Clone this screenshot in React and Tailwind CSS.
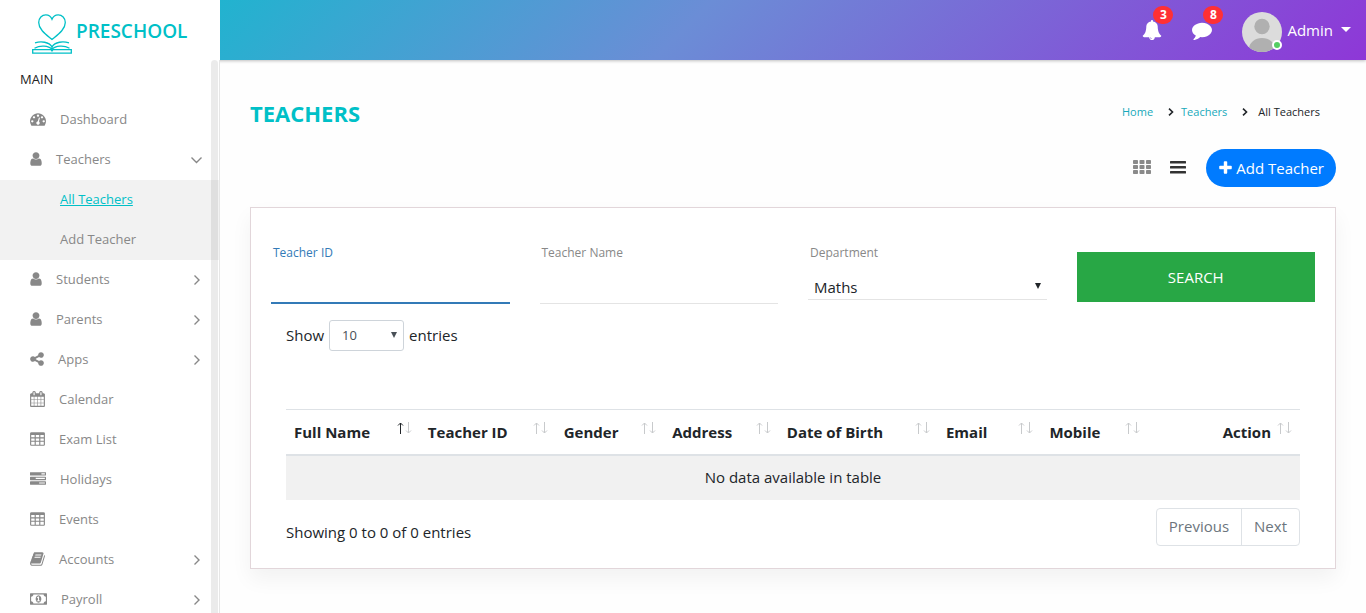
import React, { useState } from "react";

const ICONS = {
  dashboard: {
    box: "0 0 1792 1792",
    w: "w-4",
    d: "M384 1152q0-53-37.5-90.5t-90.5-37.5-90.5 37.5-37.5 90.5 37.5 90.5 90.5 37.5 90.5-37.5 37.5-90.5zm192-448q0-53-37.5-90.5t-90.5-37.5-90.5 37.5-37.5 90.5 37.5 90.5 90.5 37.5 90.5-37.5 37.5-90.5zm428 481l101-382q6-26-7.5-48.5t-38.5-29.5-48 6.5-30 39.5l-101 382q-60 5-107 43.5t-63 98.5q-20 77 20 146t117 89 146-20 89-117q16-60-6-117t-72-91zm660-33q0-53-37.5-90.5t-90.5-37.5-90.5 37.5-37.5 90.5 37.5 90.5 90.5 37.5 90.5-37.5 37.5-90.5zm-640-640q0-53-37.5-90.5t-90.5-37.5-90.5 37.5-37.5 90.5 37.5 90.5 90.5 37.5 90.5-37.5 37.5-90.5zm448 192q0-53-37.5-90.5t-90.5-37.5-90.5 37.5-37.5 90.5 37.5 90.5 90.5 37.5 90.5-37.5 37.5-90.5zm320 448q0 261-141 483-19 29-54 29h-1402q-35 0-54-29-141-221-141-483 0-182 71-348t191-286 286-191 348-71 348 71 286 191 191 286 71 348z",
  },
  user: {
    box: "256 0 1280 1792",
    w: "w-3",
    d: "M1536 1399q0 109-62.5 187t-150.5 78h-854q-88 0-150.5-78t-62.5-187q0-85 8.5-160.5t31.5-152 58.5-131 94-89 134.5-34.5q131 128 313 128t313-128q76 0 134.5 34.5t94 89 58.5 131 31.5 152 8.5 160.5zm-256-887q0 159-112.5 271.5t-271.5 112.5-271.5-112.5-112.5-271.5 112.5-271.5 271.5-112.5 271.5 112.5 112.5 271.5z",
  },
  share: {
    box: "128 0 1536 1792",
    w: "w-[14px]",
    d: "M1344 1024q133 0 226.5 93.5t93.5 226.5-93.5 226.5-226.5 93.5-226.5-93.5-93.5-226.5q0-12 2-34l-360-180q-92 86-218 86-133 0-226.5-93.5t-93.5-226.5 93.5-226.5 226.5-93.5q126 0 218 86l360-180q-2-22-2-34 0-133 93.5-226.5t226.5-93.5 226.5 93.5 93.5 226.5-93.5 226.5-226.5 93.5q-126 0-218-86l-360 180q2 22 2 34t-2 34l360 180q92-86 218-86z",
  },
  calendar: {
    box: "64 0 1664 1792",
    w: "w-[15px]",
    d: "M192 1664h288v-288h-288v288zm352 0h320v-288h-320v288zm-352-352h288v-320h-288v320zm352 0h320v-320h-320v320zm-352-384h288v-288h-288v288zm736 736h320v-288h-320v288zm-384-736h320v-288h-320v288zm768 736h288v-288h-288v288zm-384-352h320v-320h-320v320zm-352-864v-288q0-13-9.5-22.5t-22.5-9.5h-64q-13 0-22.5 9.5t-9.5 22.5v288q0 13 9.5 22.5t22.5 9.5h64q13 0 22.5-9.5t9.5-22.5zm736 864h288v-320h-288v320zm-384-384h320v-288h-320v288zm384 0h288v-288h-288v288zm32-480v-288q0-13-9.5-22.5t-22.5-9.5h-64q-13 0-22.5 9.5t-9.5 22.5v288q0 13 9.5 22.5t22.5 9.5h64q13 0 22.5-9.5t9.5-22.5zm384-64v1280q0 52-38 90t-90 38h-1408q-52 0-90-38t-38-90v-1280q0-52 38-90t90-38h128v-96q0-66 47-113t113-47h64q66 0 113 47t47 113v96h384v-96q0-66 47-113t113-47h64q66 0 113 47t47 113v96h128q52 0 90 38t38 90z",
  },
  table: {
    box: "64 0 1664 1792",
    w: "w-[15px]",
    d: "M224 128h1344q66 0 113 47t47 113v1216q0 66-47 113t-113 47h-1344q-66 0-113-47t-47-113v-1216q0-66 47-113t113-47zM192 448v256h384v-256zM704 448v256h384v-256zM1216 448v256h384v-256zM192 832v256h384v-256zM704 832v256h384v-256zM1216 832v256h384v-256zM192 1216v288q0 32 32 32h352v-320zM704 1216v320h384v-320zM1216 1216v320h352q32 0 32-32v-288z",
  },
  tasks: {
    box: "0 0 1792 1792",
    w: "w-4",
    d: "M1024 1408h640v-128h-640v128zm-384-512h1024v-128h-1024v128zm640-512h384v-128h-384v128zm512 832v256q0 26-19 45t-45 19h-1664q-26 0-45-19t-19-45v-256q0-26 19-45t45-19h1664q26 0 45 19t19 45zm0-512v256q0 26-19 45t-45 19h-1664q-26 0-45-19t-19-45v-256q0-26 19-45t45-19h1664q26 0 45 19t19 45zm0-512v256q0 26-19 45t-45 19h-1664q-26 0-45-19t-19-45v-256q0-26 19-45t45-19h1664q26 0 45 19t19 45z",
  },
  book: {
    box: "64 0 1664 1792",
    w: "w-[15px]",
    d: "M1703 478q40 57 18 129l-275 906q-19 64-76.5 107.5t-122.5 43.5h-923q-77 0-148.5-53.5t-99.5-131.5q-24-67-2-127 0-4 3-27t4-37q1-8-3-21.5t-3-19.5q2-11 8-21t16.5-23.5 16.5-23.5q23-38 45-91.5t30-91.5q3-10 .5-30t-.5-28q3-11 17-28t17-23q21-36 42-92t25-90q1-9-2.5-32t.5-28q4-13 22-30.5t22-22.5q19-26 42.5-84.5t27.5-96.5q1-8-3-25.5t-2-26.5q2-8 9-18t18-23 17-21q8-12 16.5-30.5t15-35 16-36 19.5-32 26.5-23.5 36-11.5 47.5 5.5l-1 3q38-9 51-9h761q74 0 114 56t18 130l-274 906q-36 119-71.5 153.5t-128.5 34.5h-869q-27 0-38 15-11 16-1 43 24 70 144 70h923q29 0 56-15.5t35-41.5l300-987q7-22 5-57 38 15 59 43zm-1064 2q-4 13 2 22.5t20 9.5h608q13 0 25.5-9.5t16.5-22.5l21-64q4-13-2-22.5t-20-9.5h-608q-13 0-25.5 9.5t-16.5 22.5zm-83 256q-4 13 2 22.5t20 9.5h608q13 0 25.5-9.5t16.5-22.5l21-64q4-13-2-22.5t-20-9.5h-608q-13 0-25.5 9.5t-16.5 22.5z",
  },
  money: {
    box: "0 0 1920 1792",
    w: "w-[17px]",
    d: "M768 1152h384v-96h-128v-448h-114l-148 137 77 80q42-37 55-57h2v288h-128v96zm512-256q0 70-21 142t-59.5 134-101.5 101-138 39-138-39-101.5-101-59.5-134-21-142 21-142 59.5-134 101.5-101 138-39 138 39 101.5 101 59.5 134 21 142zm512 256v-512q-106 0-181-75t-75-181h-1152q0 106-75 181t-181 75v512q106 0 181 75t75 181h1152q0-106 75-181t181-75zm128-832v1152q0 26-19 45t-45 19h-1792q-26 0-45-19t-19-45v-1152q0-26 19-45t45-19h1792q26 0 45 19t19 45z",
  },
  bell: {
    box: "0 0 1792 1792",
    w: "w-5",
    d: "M912 1696q0-16-16-16-59 0-101.5-42.5t-42.5-101.5q0-16-16-16t-16 16q0 73 51.5 124.5t124.5 51.5q16 0 16-16zm816-288q0 52-38 90t-90 38h-448q0 106-75 181t-181 75-181-75-75-181h-448q-52 0-90-38t-38-90q50-42 91-88t85-119.5 74.5-158.5 50-206 19.5-260q0-152 117-282.5t307-158.5q-8-19-8-39 0-40 28-68t68-28 68 28 28 68q0 20-8 39 190 28 307 158.5t117 282.5q0 139 19.5 260t50 206 74.5 158.5 85 119.5 91 88z",
  },
  comment: {
    box: "0 0 1792 1792",
    w: "w-5",
    d: "M1792 896q0 174-120 321.5t-326 233-450 85.5q-70 0-145-8-198 175-460 242-49 14-114 22-17 2-30.5-9t-17.5-29v-1q-3-4-.5-12t2-10 4.5-9.5l6-9 7-8.5 8-9q7-8 31-34.5t34.5-38 31-39.5 32.5-51 27-59 26-76q-157-89-247.5-220t-90.5-281q0-130 71-248.5t191-204.5 286-136.5 348-50.5q244 0 450 85.5t326 233 120 321.5z",
  },
  plus: {
    box: "192 0 1408 1792",
    w: "w-[13px]",
    d: "M1600 736v192q0 40-28 68t-68 28h-416v416q0 40-28 68t-68 28h-192q-40 0-68-28t-28-68v-416h-416q-40 0-68-28t-28-68v-192q0-40 28-68t68-28h416v-416q0-40 28-68t68-28h192q40 0 68 28t28 68v416h416q40 0 68 28t28 68z",
  },
};

function Icon({ name, className = "h-4" }) {
  const icon = ICONS[name];
  return (
    <svg viewBox={icon.box} className={`${icon.w} ${className} shrink-0`} fill="currentColor" fillRule="evenodd" aria-hidden="true">
      <path d={icon.d} />
    </svg>
  );
}

function Chevron({ open }) {
  return (
    <svg viewBox="0 0 12 12" className="h-3 w-3" fill="none" stroke="currentColor" strokeWidth="1.4" aria-hidden="true">
      <path d={open ? "M1.500 3.500l5 5 5-5" : "M4.500 1.500l4.500 4.500-4.500 4.500"} />
    </svg>
  );
}

function Logo() {
  return (
    <svg viewBox="0 0 40 40" className="h-10 w-10" fill="none" stroke="#00c0c7" strokeWidth="1.3" aria-hidden="true">
      <path d="M20 25.5C14 20.5 6.7 15.500 6.700 8.500C6.700 4 10 .8 13.800 .8C16.800 .8 19 2.600 20 5.200C21 2.600 23.200 .8 26.200 .8C30 .8 33.300 4 33.300 8.500C33.300 15.500 26 20.500 20 25.500Z" />
      <path d="M.7 35.700H19L20 37L21 35.700H39.300V39.200H.7Z" />
      <path d="M2.500 34.200C8 31.200 16.500 31.500 20 35.500C23.500 31.500 32 31.200 37.500 34.200M3 28.800C9 27 17 27.700 20 33C23 27.700 31 27 37 28.800M20 31.500V36" />
    </svg>
  );
}

const MENU = [
  { label: "Dashboard", icon: "dashboard" },
  { label: "Teachers", icon: "user", open: true, children: ["All Teachers", "Add Teacher"] },
  { label: "Students", icon: "user", more: true },
  { label: "Parents", icon: "user", more: true },
  { label: "Apps", icon: "share", more: true },
  { label: "Calendar", icon: "calendar" },
  { label: "Exam List", icon: "table" },
  { label: "Holidays", icon: "tasks" },
  { label: "Events", icon: "table" },
  { label: "Accounts", icon: "book", more: true },
  { label: "Payroll", icon: "money", more: true },
];

function Sidebar() {
  return (
    <aside className="relative w-[220px] shrink-0 overflow-hidden border-r border-[#e6e6e6] bg-white text-[13px] text-[#888]">
      <h2 className="flex h-10 items-center pl-5 text-[13px] text-[#222]">MAIN</h2>
      <nav aria-label="Main">
        <ul>
          {MENU.map((item) => (
            <li key={item.label}>
              <a href="#" className="flex h-10 items-center gap-[14px] pr-[17px] pl-[30px]">
                <Icon name={item.icon} className="mb-0.5 h-4" />
                <span className="flex-1">{item.label}</span>
                {(item.more || item.open) && <Chevron open={item.open} />}
              </a>
              {item.children && (
                <ul className="bg-[#f2f2f2]">
                  {item.children.map((child, i) => (
                    <li key={child}>
                      <a href="#" className={`flex h-10 items-center pl-[60px] ${i === 0 ? "text-[#00c0c7] underline" : ""}`}>
                        {child}
                      </a>
                    </li>
                  ))}
                </ul>
              )}
            </li>
          ))}
        </ul>
      </nav>
      <div className="absolute inset-y-0 right-px w-[7px] rounded-t-full bg-black/8" />
    </aside>
  );
}

function Badge({ children }) {
  return (
    <span className="absolute -top-[14px] left-[11px] flex h-[18px] w-5 items-center justify-center rounded-full bg-[#ff3035] text-xs font-bold">
      {children}
    </span>
  );
}

function Header() {
  return (
    <header className="relative flex h-[60px] bg-[linear-gradient(135deg,#00c4cc_0%,#6b8dd6_50%,#8e37d7_100%)] text-white shadow-[0_1px_3px_rgba(0,0,0,0.25)]">
      <a href="#" className="flex w-[220px] items-center gap-1 bg-white pt-2 pl-8 text-[19px] font-semibold text-[#00c0c7]">
        <Logo />
        <span className="pb-1.5">PRESCHOOL</span>
      </a>
      <div className="flex flex-1 items-center justify-end pr-[15px]">
        <button type="button" aria-label="Notifications" className="relative mr-[30px]">
          <Icon name="bell" className="h-5" />
          <Badge>3</Badge>
        </button>
        <button type="button" aria-label="Messages" className="relative mr-[30px]">
          <Icon name="comment" className="h-5" />
          <Badge>8</Badge>
        </button>
        <button type="button" className="flex items-center gap-[5px] text-[15px]">
          <span className="relative mt-1">
            <svg viewBox="0 0 40 40" className="h-10 w-10 rounded-full bg-[#dcdcdc]" fill="#b0b0b0" aria-hidden="true">
              <circle cx="20" cy="14.500" r="7.700" />
              <ellipse cx="20" cy="37" rx="13" ry="11" />
            </svg>
            <span className="absolute right-0 bottom-0.5 h-[10px] w-[10px] rounded-full border-2 border-white bg-[#55ce63]" />
          </span>
          <span>Admin</span>
          <svg viewBox="0 0 10 5" className="mb-0.5 ml-[3px] h-[5px] w-[10px]" fill="currentColor" aria-hidden="true">
            <path d="M0 0h10L5 5z" />
          </svg>
        </button>
      </div>
    </header>
  );
}

const COLUMNS = [
  { label: "Full Name", width: "w-[13.2%]", sorted: true },
  { label: "Teacher ID", width: "w-[13.4%]" },
  { label: "Gender", width: "w-[10.7%]" },
  { label: "Address", width: "w-[11.3%]" },
  { label: "Date of Birth", width: "w-[15.7%]" },
  { label: "Email", width: "w-[10.2%]" },
  { label: "Mobile", width: "w-[10.5%]" },
  { label: "Action", width: "w-[15%]", right: true },
];

function SortArrows({ sorted }) {
  return (
    <svg viewBox="0 0 15 12" className="mb-[7px] h-3 w-[15px] shrink-0" fill="none" stroke="#c8cacc" aria-hidden="true">
      <path d="M3.500 12V1M1 3.500L3.500 1L6 3.500" stroke={sorted ? "#212529" : "#c8cacc"} />
      <path d="M11.500 0V11M9 8.500L11.500 11L14 8.500" />
    </svg>
  );
}

function Breadcrumb() {
  const arrow = (
    <svg viewBox="0 0 6 8" className="h-2 w-1.5" fill="none" stroke="#212529" strokeWidth="1.600" aria-hidden="true">
      <path d="M1 .7L4.500 4L1 7.300" />
    </svg>
  );
  return (
    <nav aria-label="Breadcrumb" className="pr-4 text-[11px]">
      <ol className="flex items-center">
        <li className="text-[#17a9bb]"><a href="#">Home</a></li>
        <li className="ml-[15px] flex items-center gap-[7px] text-[#17a9bb]">{arrow}<a href="#">Teachers</a></li>
        <li className="ml-[15px] flex items-center gap-[10px]">{arrow}<span>All Teachers</span></li>
      </ol>
    </nav>
  );
}

function SearchForm() {
  return (
    <form className="grid grid-cols-4 gap-[30px]" onSubmit={(e) => e.preventDefault()}>
      <div className="flex h-[60px] flex-col">
        <label htmlFor="teacher-id" className="pl-0.5 text-xs leading-[18px] text-[#337ab7]">Teacher ID</label>
        <input id="teacher-id" className="min-h-0 flex-1 border-b-2 border-[#337ab7] outline-none" />
      </div>
      <div className="flex h-[60px] flex-col">
        <label htmlFor="teacher-name" className="pl-0.5 text-xs leading-[18px] text-[#888]">Teacher Name</label>
        <input id="teacher-name" className="min-h-0 flex-1 border-b border-[#e4e4e4] outline-none" />
      </div>
      <div className="flex h-14 flex-col">
        <label htmlFor="department" className="pl-0.5 text-xs leading-[18px] text-[#888]">Department</label>
        <div className="relative flex flex-1 items-end border-b border-[#e4e4e4]">
          <select id="department" className="h-6 w-full appearance-none pl-1.5 text-[15px] leading-6 outline-none">
            <option>Maths</option>
            <option>Science</option>
          </select>
          <svg viewBox="0 0 6 6" className="pointer-events-none absolute right-1.5 bottom-[10px] h-1.5 w-1.5" fill="#212529" aria-hidden="true">
            <path d="M0 0h6L3 6z" />
          </svg>
        </div>
      </div>
      <button type="submit" className="mt-2 h-[50px] bg-[#28a745] text-[15px] text-white">SEARCH</button>
    </form>
  );
}

export default function App() {
  const [length, setLength] = useState("10");
  return (
    <div className="flex h-screen flex-col overflow-hidden bg-[#fefefe] font-['Open_Sans',sans-serif] text-[#212529]">
      <Header />
      <div className="flex min-h-0 flex-1">
        <Sidebar />
        <main className="min-w-0 flex-1 overflow-hidden px-[30px] pt-[38px]">
          <div className="flex items-start justify-between">
            <h1 className="text-[22px] leading-[30px] font-bold text-[#00c0c7]">TEACHERS</h1>
            <div className="pt-1.5">
              <Breadcrumb />
            </div>
          </div>
          <div className="mt-[21px] flex items-center justify-end">
            <a href="#" aria-label="Grid view" className="mr-[19px] mb-0.5 text-[#8a8a8a]">
              <svg viewBox="0 0 18 14" className="h-[14px] w-[18px]" fill="currentColor" aria-hidden="true">
                {[0, 5, 10].map((y) =>
                  [0, 6.500, 13].map((x) => <rect key={`${x}-${y}`} x={x} y={y} width="5" height="4" rx="0.800" />)
                )}
              </svg>
            </a>
            <a href="#" aria-label="List view" className="mr-5 mb-0.5 text-[#333]">
              <svg viewBox="0 0 16 14" className="h-[14px] w-4" fill="currentColor" aria-hidden="true">
                <rect y="1" width="16" height="2.500" rx="0.500" />
                <rect y="6" width="16" height="2.500" rx="0.500" />
                <rect y="11" width="16" height="2.500" rx="0.500" />
              </svg>
            </a>
            <button type="button" className="flex h-[38px] items-center gap-1 rounded-full bg-[#007bff] pr-3 pl-[13px] text-[15px] text-white">
              <Icon name="plus" className="h-4" />
              Add Teacher
            </button>
          </div>

          <section className="mt-5 border border-[#e2d6da] bg-white px-5 pt-9 shadow-[0_10px_20px_rgba(0,0,0,0.05)]">
            <SearchForm />
            <div className="px-[15px] pb-[22px]">
              <div className="mt-4 flex items-center gap-[5px] text-[15px]">
                <label htmlFor="length">Show</label>
                <div className="relative">
                  <select
                    id="length"
                    value={length}
                    onChange={(e) => setLength(e.target.value)}
                    className="block h-[31px] w-[75px] appearance-none rounded-[3px] border border-[#ced4da] pl-3 text-[13px] text-[#495057]"
                  >
                    <option>10</option>
                    <option>25</option>
                    <option>50</option>
                  </select>
                  <svg viewBox="0 0 6 6" className="pointer-events-none absolute top-3 right-[7px] h-1.5 w-1.5" fill="#495057" aria-hidden="true">
                    <path d="M0 0h6L3 6z" />
                  </svg>
                </div>
                <span>entries</span>
              </div>

              <table className="mt-[58px] w-full table-fixed text-[15px]">
                <thead>
                  <tr className="border-t border-b-2 border-[#dee2e6]">
                    {COLUMNS.map((col) => (
                      <th key={col.label} scope="col" className={`${col.width} h-[45px] px-2 py-0 text-left font-bold whitespace-nowrap`}>
                        <div className={`flex items-center gap-1.5 ${col.right ? "justify-end" : "justify-between"}`}>
                          {col.label}
                          <SortArrows sorted={col.sorted} />
                        </div>
                      </th>
                    ))}
                  </tr>
                </thead>
                <tbody>
                  <tr className="bg-[#f1f1f1]">
                    <td colSpan={8} className="h-[45px] text-center">No data available in table</td>
                  </tr>
                </tbody>
              </table>

              <div className="mt-2 flex items-start justify-between text-[15px]">
                <p className="pt-[13px]">Showing 0 to 0 of 0 entries</p>
                <div className="flex h-[38px] rounded border border-[#dee2e6] text-[#6c757d]">
                  <button type="button" className="border-r border-[#dee2e6] px-3">Previous</button>
                  <button type="button" className="px-3">Next</button>
                </div>
              </div>
            </div>
          </section>
        </main>
      </div>
    </div>
  );
}
